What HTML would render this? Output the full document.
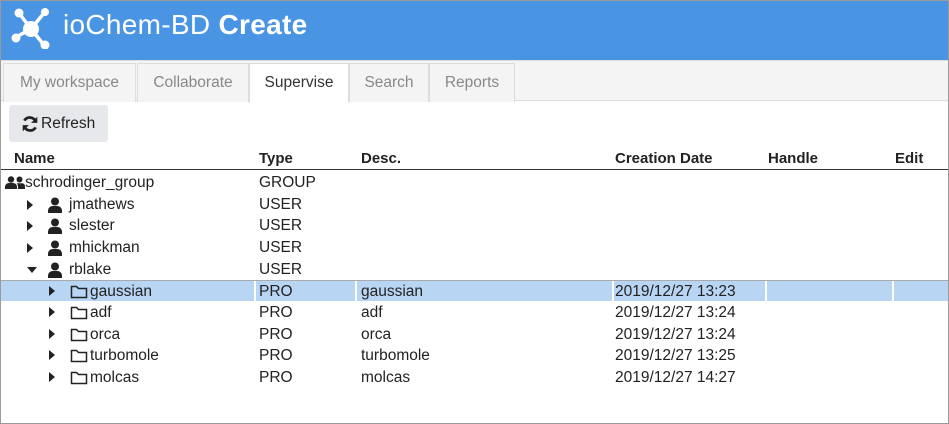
<!DOCTYPE html>
<html><head><style>
*{margin:0;padding:0;box-sizing:border-box}
body{width:949px;height:424px;overflow:hidden;font-family:"Liberation Sans",sans-serif;background:#fff;position:relative;color:#222}
#frame{position:absolute;left:0;top:0;width:949px;height:424px;border:1px solid #9a9a9a}
#hdr{position:absolute;left:1px;top:1px;width:947px;height:59px;background:#4a95e3}
#title{position:absolute;left:62px;top:8px;color:#fff;font-size:28px;letter-spacing:0.3px}
#tabs{position:absolute;left:1px;top:60px;width:947px;height:41px;background:#f4f4f4;border-top:1px solid #ddd;border-bottom:1px solid #ddd}
.tab{position:absolute;top:2px;height:39px;border:1px solid #ddd;border-bottom:none;background:#f4f4f4;color:#888;font-size:15.5px;text-align:center;line-height:38px}
.tab.on{background:#fff;color:#333;height:40px}
#btn{position:absolute;left:9px;top:105px;width:99px;height:37px;background:#e6e8eb;border-radius:3px;font-size:15.5px;line-height:38px;padding-left:32px;color:#222}
.h{position:absolute;top:150px;font-weight:bold;font-size:15px;color:#222}
#hl{position:absolute;left:1px;top:169px;width:947px;height:1px;background:#333}
.r{position:absolute;left:1px;width:947px;height:21px;font-size:15.5px}
.r span{position:absolute;top:2px}
.sel{background:#b8d5f3;border-top:1px solid #aaa}
.sep{position:absolute;top:0;width:2px;height:21px;background:#fff}
</style></head><body>
<div id="frame"></div>
<div id="hdr">
<svg style="position:absolute;left:9px;top:4px" width="42" height="44" viewBox="0 0 42 44">
<g stroke="#fff" stroke-width="3.5"><line x1="9" y1="8" x2="21" y2="24"/><line x1="34" y1="8" x2="21" y2="24"/><line x1="6" y1="32" x2="21" y2="24"/><line x1="34" y1="40" x2="21" y2="24"/></g>
<g fill="#fff"><circle cx="21" cy="24" r="8"/><circle cx="9" cy="8" r="4.5"/><circle cx="35" cy="7" r="4"/><circle cx="6" cy="33" r="4.5"/><circle cx="35" cy="40" r="4.5"/></g></svg>
<div id="title">ioChem-BD <b>Create</b></div>
</div>
<div id="tabs">
<div class="tab" style="left:2px;width:133px">My workspace</div>
<div class="tab" style="left:136px;width:112px">Collaborate</div>
<div class="tab on" style="left:248px;width:100px">Supervise</div>
<div class="tab" style="left:348px;width:80px">Search</div>
<div class="tab" style="left:428px;width:86px">Reports</div>
</div>
<div id="btn"><svg style="position:absolute;left:12px;top:10px" width="18" height="18" viewBox="0 0 16 16"><path d="M13 6A5.5 5.5 0 0 0 3 5" stroke="#222" stroke-width="2.4" fill="none"/><path d="M14.5 1.5V7H9z" fill="#222"/><path d="M3 10A5.5 5.5 0 0 0 13 11" stroke="#222" stroke-width="2.4" fill="none"/><path d="M1.5 14.5V9H7z" fill="#222"/></svg>Refresh</div>
<div class="h" style="left:14px">Name</div><div class="h" style="left:259px">Type</div><div class="h" style="left:361px">Desc.</div><div class="h" style="left:615px">Creation Date</div><div class="h" style="left:768px">Handle</div><div class="h" style="left:895px">Edit</div>
<div id="hl"></div>

<svg width="0" height="0" style="position:absolute"><defs>
<symbol id="u" viewBox="0 0 14 16"><circle cx="7" cy="4.5" r="4" fill="#222"/><path d="M0 16v-2c0-3 2-5 5-5h4c3 0 5 2 5 5v2z" fill="#222"/></symbol>
<symbol id="f" viewBox="0 0 18 15"><path d="M1.5 2.5h5l2 2h8v9h-15z" fill="none" stroke="#222" stroke-width="1.5"/></symbol>
<symbol id="ar" viewBox="0 0 6 10"><path d="M0 0l6 5-6 5z" fill="#222"/></symbol>
<symbol id="ad" viewBox="0 0 10 6"><path d="M0 0h10l-5 6z" fill="#222"/></symbol>
</defs></svg>

<div class="r" style="top:172px"><svg style="position:absolute;left:4px;top:4px" width="20" height="13" viewBox="0 0 20 13"><circle cx="6" cy="3.5" r="3.2" fill="#222"/><path d="M0 13v-2c0-2 1.5-4 4-4h4c2.5 0 4 2 4 4v2z" fill="#222"/><circle cx="14.5" cy="3.5" r="3" fill="#222"/><path d="M13 13v-2c0-1.5-.5-2.8-1.3-3.8H17c2 0 3 1.5 3 3.5V13z" fill="#222"/></svg><span style="left:24px">schrodinger_group</span><span style="left:258px">GROUP</span></div>

<div class="r" style="top:194px"><svg style="position:absolute;left:26px;top:6px" width="6" height="10"><use href="#ar"/></svg><svg style="position:absolute;left:47px;top:3px" width="14" height="16"><use href="#u"/></svg><span style="left:68px">jmathews</span><span style="left:258px">USER</span></div>
<div class="r" style="top:215px"><svg style="position:absolute;left:26px;top:6px" width="6" height="10"><use href="#ar"/></svg><svg style="position:absolute;left:47px;top:3px" width="14" height="16"><use href="#u"/></svg><span style="left:68px">slester</span><span style="left:258px">USER</span></div>
<div class="r" style="top:237px"><svg style="position:absolute;left:26px;top:6px" width="6" height="10"><use href="#ar"/></svg><svg style="position:absolute;left:47px;top:3px" width="14" height="16"><use href="#u"/></svg><span style="left:68px">mhickman</span><span style="left:258px">USER</span></div>
<div class="r" style="top:259px"><svg style="position:absolute;left:26px;top:8px" width="10" height="6"><use href="#ad"/></svg><svg style="position:absolute;left:47px;top:3px" width="14" height="16"><use href="#u"/></svg><span style="left:68px">rblake</span><span style="left:258px">USER</span></div>

<div class="r sel" style="top:280px"><div class="sep" style="left:253px"></div><div class="sep" style="left:354px"></div><div class="sep" style="left:611px"></div><div class="sep" style="left:764px"></div><div class="sep" style="left:891px"></div>
<svg style="position:absolute;left:48px;top:5px" width="6" height="10"><use href="#ar"/></svg><svg style="position:absolute;left:69px;top:3px" width="18" height="15"><use href="#f"/></svg><span style="left:89px">gaussian</span><span style="left:258px">PRO</span><span style="left:360px">gaussian</span><span style="left:614px">2019/12/27 13:23</span></div>
<div class="r" style="top:302px"><svg style="position:absolute;left:48px;top:5px" width="6" height="10"><use href="#ar"/></svg><svg style="position:absolute;left:69px;top:3px" width="18" height="15"><use href="#f"/></svg><span style="left:89px">adf</span><span style="left:258px">PRO</span><span style="left:360px">adf</span><span style="left:614px">2019/12/27 13:24</span></div>
<div class="r" style="top:324px"><svg style="position:absolute;left:48px;top:5px" width="6" height="10"><use href="#ar"/></svg><svg style="position:absolute;left:69px;top:3px" width="18" height="15"><use href="#f"/></svg><span style="left:89px">orca</span><span style="left:258px">PRO</span><span style="left:360px">orca</span><span style="left:614px">2019/12/27 13:24</span></div>
<div class="r" style="top:345px"><svg style="position:absolute;left:48px;top:5px" width="6" height="10"><use href="#ar"/></svg><svg style="position:absolute;left:69px;top:3px" width="18" height="15"><use href="#f"/></svg><span style="left:89px">turbomole</span><span style="left:258px">PRO</span><span style="left:360px">turbomole</span><span style="left:614px">2019/12/27 13:25</span></div>
<div class="r" style="top:367px"><svg style="position:absolute;left:48px;top:5px" width="6" height="10"><use href="#ar"/></svg><svg style="position:absolute;left:69px;top:3px" width="18" height="15"><use href="#f"/></svg><span style="left:89px">molcas</span><span style="left:258px">PRO</span><span style="left:360px">molcas</span><span style="left:614px">2019/12/27 14:27</span></div>
</body></html>
